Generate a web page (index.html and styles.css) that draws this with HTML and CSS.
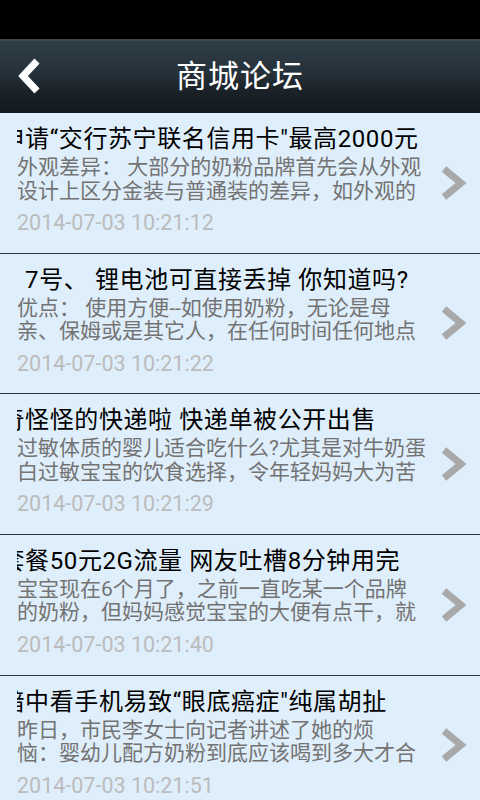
FILE: index.html
```html
<!DOCTYPE html>
<html lang="zh-CN">
<head>
<meta charset="utf-8">
<title>商城论坛</title>
<link rel="stylesheet" href="styles.css">
</head>
<body>
<div class="status"></div>
<header class="topbar">
  <svg class="back" width="30" height="40" viewBox="0 0 30 40"><polyline points="21,5 7,20 21,35" fill="none" stroke="#fff" stroke-width="7" stroke-linejoin="miter" stroke-miterlimit="10"/></svg>
  <h1 class="title">商城论坛</h1>
</header>
<ul class="list">
  <li class="item">
    <div class="body">
      <div class="head"><span class="scroll">申请“交行苏宁联名信用卡"最高2000元</span></div>
      <p class="desc">外观差异： 大部分的奶粉品牌首先会从外观<br>设计上区分金装与普通装的差异，如外观的</p>
      <div class="date">2014-07-03 10:21:12</div>
    </div>
    <svg class="chev" width="30" height="34" viewBox="0 0 30 34"><polyline points="5,3 22,17 5,31" fill="none" stroke="#a9a9a9" stroke-width="7"/></svg>
  </li>
  <li class="item">
    <div class="body">
      <div class="head"><span class="scroll">、7号、 锂电池可直接丢掉 你知道吗?</span></div>
      <p class="desc">优点： 使用方便--如使用奶粉，无论是母<br>亲、保姆或是其它人，在任何时间任何地点</p>
      <div class="date">2014-07-03 10:21:22</div>
    </div>
    <svg class="chev" width="30" height="34" viewBox="0 0 30 34"><polyline points="5,3 22,17 5,31" fill="none" stroke="#a9a9a9" stroke-width="7"/></svg>
  </li>
  <li class="item">
    <div class="body">
      <div class="head"><span class="scroll">奇怪怪的快递啦 快递单被公开出售</span></div>
      <p class="desc">过敏体质的婴儿适合吃什么?尤其是对牛奶蛋<br>白过敏宝宝的饮食选择，令年轻妈妈大为苦</p>
      <div class="date">2014-07-03 10:21:29</div>
    </div>
    <svg class="chev" width="30" height="34" viewBox="0 0 30 34"><polyline points="5,3 22,17 5,31" fill="none" stroke="#a9a9a9" stroke-width="7"/></svg>
  </li>
  <li class="item">
    <div class="body">
      <div class="head"><span class="scroll">套餐50元2G流量 网友吐槽8分钟用完</span></div>
      <p class="desc">宝宝现在6个月了，之前一直吃某一个品牌<br>的奶粉，但妈妈感觉宝宝的大便有点干，就</p>
      <div class="date">2014-07-03 10:21:40</div>
    </div>
    <svg class="chev" width="30" height="34" viewBox="0 0 30 34"><polyline points="5,3 22,17 5,31" fill="none" stroke="#a9a9a9" stroke-width="7"/></svg>
  </li>
  <li class="item">
    <div class="body">
      <div class="head"><span class="scroll">暗中看手机易致“眼底癌症"纯属胡扯</span></div>
      <p class="desc">昨日，市民李女士向记者讲述了她的烦<br>恼：婴幼儿配方奶粉到底应该喝到多大才合</p>
      <div class="date">2014-07-03 10:21:51</div>
    </div>
    <svg class="chev" width="30" height="34" viewBox="0 0 30 34"><polyline points="5,3 22,17 5,31" fill="none" stroke="#a9a9a9" stroke-width="7"/></svg>
  </li>
</ul>
</body>
</html>
```

FILE: styles.css
```css
* { box-sizing: border-box; }
html, body { margin: 0; padding: 0; }
body {
  width: 480px;
  height: 800px;
  overflow: hidden;
  background: #dfeefb;
  font-family: Roboto, "Noto Sans CJK SC", sans-serif;
}
.status {
  height: 39px;
  background: #000;
}
.topbar {
  height: 74px;
  position: relative;
  display: flex;
  align-items: center;
  justify-content: center;
  border-top: 2px solid #434b49;
  background: linear-gradient(to bottom, #2f3e46 0%, #25313a 45%, #1a2127 70%, #131a1f 100%);
}
.back {
  position: absolute;
  left: 16px;
  top: 15px;
}
.title {
  margin: 0;
  font-size: 31px;
  font-weight: normal;
  color: #fff;
  line-height: 40px;
  letter-spacing: 1px;
}
.list {
  list-style: none;
  margin: 0;
  padding: 0;
}
.item {
  height: 140.67px;
  border-bottom: 1px solid #2e3338;
  display: flex;
  align-items: center;
  padding: 0 11.5px 0 17px;
}
.body {
  flex: 1;
  min-width: 0;
  align-self: flex-start;
  padding-top: 12px;
}
.head {
  height: 28px;
  line-height: 28px;
  font-size: 24px;
  letter-spacing: 0.6px;
  color: #000;
  white-space: nowrap;
  overflow: hidden;
}
.scroll {
  display: inline-block;
  margin-left: -16.5px;
}
.desc {
  margin: 3px 0 0;
  font-size: 21px;
  line-height: 23.5px;
  color: #737373;
  white-space: nowrap;
  overflow: hidden;
}
.date {
  margin-top: 7px;
  font-size: 21.5px;
  line-height: 26px;
  color: #bcbcbc;
}
.chev {
  flex: none;
  margin-left: 8px;
}
```
